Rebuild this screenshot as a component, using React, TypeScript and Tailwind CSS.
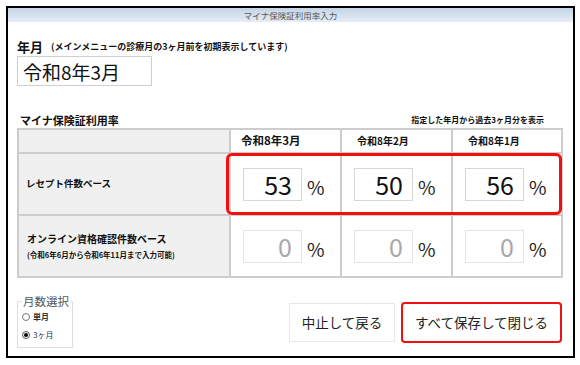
import React from "react";

const FONT = { fontFamily: '"Noto Sans CJK JP", "Noto Sans", sans-serif' };

const months = ["令和8年3月", "令和8年2月", "令和8年1月"];
const receipt = [53, 50, 56];
const online = [0, 0, 0];

function RateCell({ value, muted }: { value: number; muted?: boolean }) {
  return (
    <div className="flex items-center bg-white pl-[12px]">
      <div
        className={`flex h-[33px] w-[59px] items-center justify-end border pr-[9px] text-[25px] leading-none ${
          muted ? "border-[#e4e4e4] text-[#a8a8a8]" : "border-[#d6d6d6] text-[#111]"
        }`}
      >
        {value}
      </div>
      <span className="ml-[5px] mt-[4px] text-[19px] leading-none text-[#222]">%</span>
    </div>
  );
}

export default function App() {
  return (
    <div className="h-[365px] w-[580px] bg-white pl-[6px] pt-[6px]" style={FONT}>
      <div className="flex h-[352px] w-[569px] flex-col border-2 border-black">
        <div className="flex h-[14px] items-center justify-center bg-gradient-to-b from-[#c4d4e6] to-[#e6edf6] text-[8.5px] leading-none text-[#555]">
          マイナ保険証利用率入力
        </div>

        <div className="flex flex-col px-[9px]">
          <div className="mt-[15px] flex h-[16px] items-end leading-none text-[#111]">
            <span className="text-[13px] font-bold">年月</span>
            <span className="mb-[2px] ml-[8px] text-[9px] font-bold">(メインメニューの診療月の3ヶ月前を初期表示しています)</span>
          </div>
          <div className="mt-[3px] flex h-[30px] w-[135px] items-center border border-[#d0d0d0] pl-[5px] text-[19px] leading-none text-[#111] shadow-[inset_0_0_1px_#e0e0e0]">
            令和8年3月
          </div>

          <div className="mt-[26px] flex h-[16px] items-center justify-between pl-[3px] pr-[20px] text-[#111]">
            <span className="text-[11px] font-bold leading-none">マイナ保険証利用率</span>
            <span className="text-[8px] font-bold leading-none">指定した年月から過去3ヶ月分を表示</span>
          </div>

          <div className="relative">
            <div className="grid w-[546px] grid-cols-[210px_109px_109px_108px] grid-rows-[22px_60px_60px] gap-[2px] bg-[#cdcdcd] p-[2px]">
              <div className="bg-[#f0f0f0]" />
              {months.map((m, i) => (
                <div
                  key={m}
                  className={`flex items-center bg-white font-bold leading-none text-[#111] ${
                    i === 0 ? "pl-[10px] text-[11.5px]" : "pl-[15px] text-[10px]"
                  }`}
                >
                  {m}
                </div>
              ))}

              <div className="flex items-center bg-[#f0f0f0] pl-[7px] text-[9.5px] font-bold leading-none text-[#111]">
                レセプト件数ベース
              </div>
              {receipt.map((v, i) => (
                <RateCell key={i} value={v} />
              ))}

              <div className="flex flex-col justify-center bg-[#f0f0f0] pl-[8px] font-bold leading-none text-[#111]">
                <span className="text-[10px]">オンライン資格確認件数ベース</span>
                <span className="mt-[7px] text-[7.5px]">(令和6年6月から令和6年11月まで入力可能)</span>
              </div>
              {online.map((v, i) => (
                <RateCell key={i} value={v} muted />
              ))}
            </div>
            <div className="pointer-events-none absolute left-[209px] top-[25px] h-[62px] w-[336px] rounded-[6px] border-[3px] border-[#f01010]" />
          </div>

          <div className="mt-[17px] flex items-start justify-between pr-[2px]">
            <fieldset className="h-[53px] w-[56px] border border-[#dedede] pl-[4px]">
              <legend className="px-[1px] text-[11.5px] leading-[12px] text-[#555]">月数選択</legend>
              <div className="mt-[6px] flex items-center gap-[3px] text-[8px] font-bold leading-none text-[#333]">
                <span className="h-[8px] w-[8px] rounded-full border border-[#777] bg-white" />
                単月
              </div>
              <div className="mt-[10px] flex items-center gap-[3px] text-[8px] leading-none text-[#333]">
                <span className="flex h-[8px] w-[8px] items-center justify-center rounded-full border border-[#555] bg-white">
                  <span className="h-[4px] w-[4px] rounded-full bg-black" />
                </span>
                3ヶ月
              </div>
            </fieldset>

            <div className="mt-[8px] flex gap-[6px]">
              <button className="flex h-[39px] w-[106px] items-center justify-center border border-[#e8e8e8] bg-white text-[13.5px] leading-none text-[#222]">
                中止して戻る
              </button>
              <button className="flex h-[41px] w-[161px] -translate-y-[1px] items-center justify-center rounded-[4px] border-2 border-[#f01010] bg-white text-[13.5px] leading-none text-[#222]">
                すべて保存して閉じる
              </button>
            </div>
          </div>
        </div>
      </div>
    </div>
  );
}
